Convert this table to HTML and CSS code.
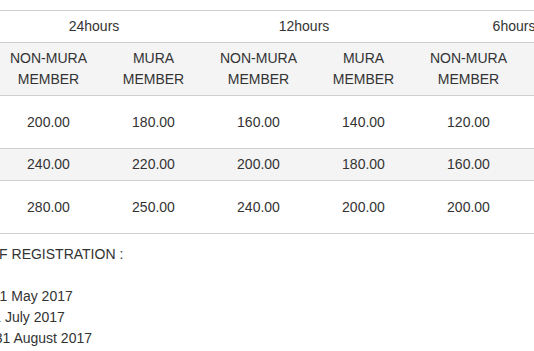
FILE: index.html
```html
<!DOCTYPE html>
<html>
<head>
<meta charset="utf-8">
<title>Rates</title>
<link rel="stylesheet" href="styles.css">
</head>
<body>
<div class="page">
  <table class="rates">
    <colgroup>
      <col class="col-day">
      <col class="col-rate"><col class="col-rate">
      <col class="col-rate"><col class="col-rate">
      <col class="col-rate"><col class="col-rate">
    </colgroup>
    <thead>
      <tr>
        <th class="day" rowspan="2">DAY</th>
        <th class="group" colspan="2">24hours</th>
        <th class="group" colspan="2">12hours</th>
        <th class="group" colspan="2">6hours</th>
      </tr>
      <tr class="alt">
        <th>NON-MURA<br>MEMBER</th>
        <th>MURA<br>MEMBER</th>
        <th>NON-MURA<br>MEMBER</th>
        <th>MURA<br>MEMBER</th>
        <th>NON-MURA<br>MEMBER</th>
        <th>MURA<br>MEMBER</th>
      </tr>
    </thead>
    <tbody>
      <tr>
        <td class="day">MONDAY -<br>THURSDAY</td>
        <td>200.00</td><td>180.00</td><td>160.00</td><td>140.00</td><td>120.00</td><td>100.00</td>
      </tr>
      <tr class="alt">
        <td class="day">FRIDAY</td>
        <td>240.00</td><td>220.00</td><td>200.00</td><td>180.00</td><td>160.00</td><td>140.00</td>
      </tr>
      <tr>
        <td class="day">SATURDAY -<br>SUNDAY</td>
        <td>280.00</td><td>250.00</td><td>240.00</td><td>200.00</td><td>200.00</td><td>180.00</td>
      </tr>
    </tbody>
  </table>

  <div class="reg">
    <div class="reg-title">DATE OF REGISTRATION :</div>
    <div class="reg-list">
      <div class="reg-line"><span class="lbl lbl-a">Early :</span>1 May 2017</div>
      <div class="reg-line"><span class="lbl lbl-b">Mid :</span>1 July 2017</div>
      <div class="reg-line"><span class="lbl lbl-c">Late :</span>31 August 2017</div>
    </div>
  </div>
</div>
</body>
</html>
```

FILE: styles.css
```css
html, body {
  margin: 0;
  padding: 0;
  background: #ffffff;
}

body {
  font-family: "Liberation Sans", Arial, sans-serif;
  font-size: 14px;
  line-height: 21px;
  color: #333333;
}

.page {
  width: 534px;
  height: 351px;
  overflow: hidden;
  padding-top: 10px;
  box-sizing: border-box;
}

.rates {
  margin-left: -124px;
  border-collapse: collapse;
  table-layout: fixed;
  width: 750px;
}

.col-day {
  width: 120px;
}

.col-rate {
  width: 105px;
}

.rates th,
.rates td {
  border-top: 1px solid #d0d0d0;
  border-bottom: 1px solid #d0d0d0;
  padding: 5px;
  text-align: center;
  vertical-align: middle;
  font-weight: normal;
  white-space: nowrap;
}

.rates th.group {
  padding-right: 19px;
}

.rates tr.alt th,
.rates tr.alt td {
  background: #f4f4f4;
}

.reg {
  margin-top: 10px;
  margin-left: -52px;
  white-space: nowrap;
}

.reg-title {
  margin-bottom: 21px;
}

.lbl {
  display: inline-block;
  overflow: hidden;
  vertical-align: bottom;
  color: #333333;
}

.lbl-a { width: 51.6px; }
.lbl-b { width: 45.3px; }
.lbl-c { width: 46.7px; }
```
